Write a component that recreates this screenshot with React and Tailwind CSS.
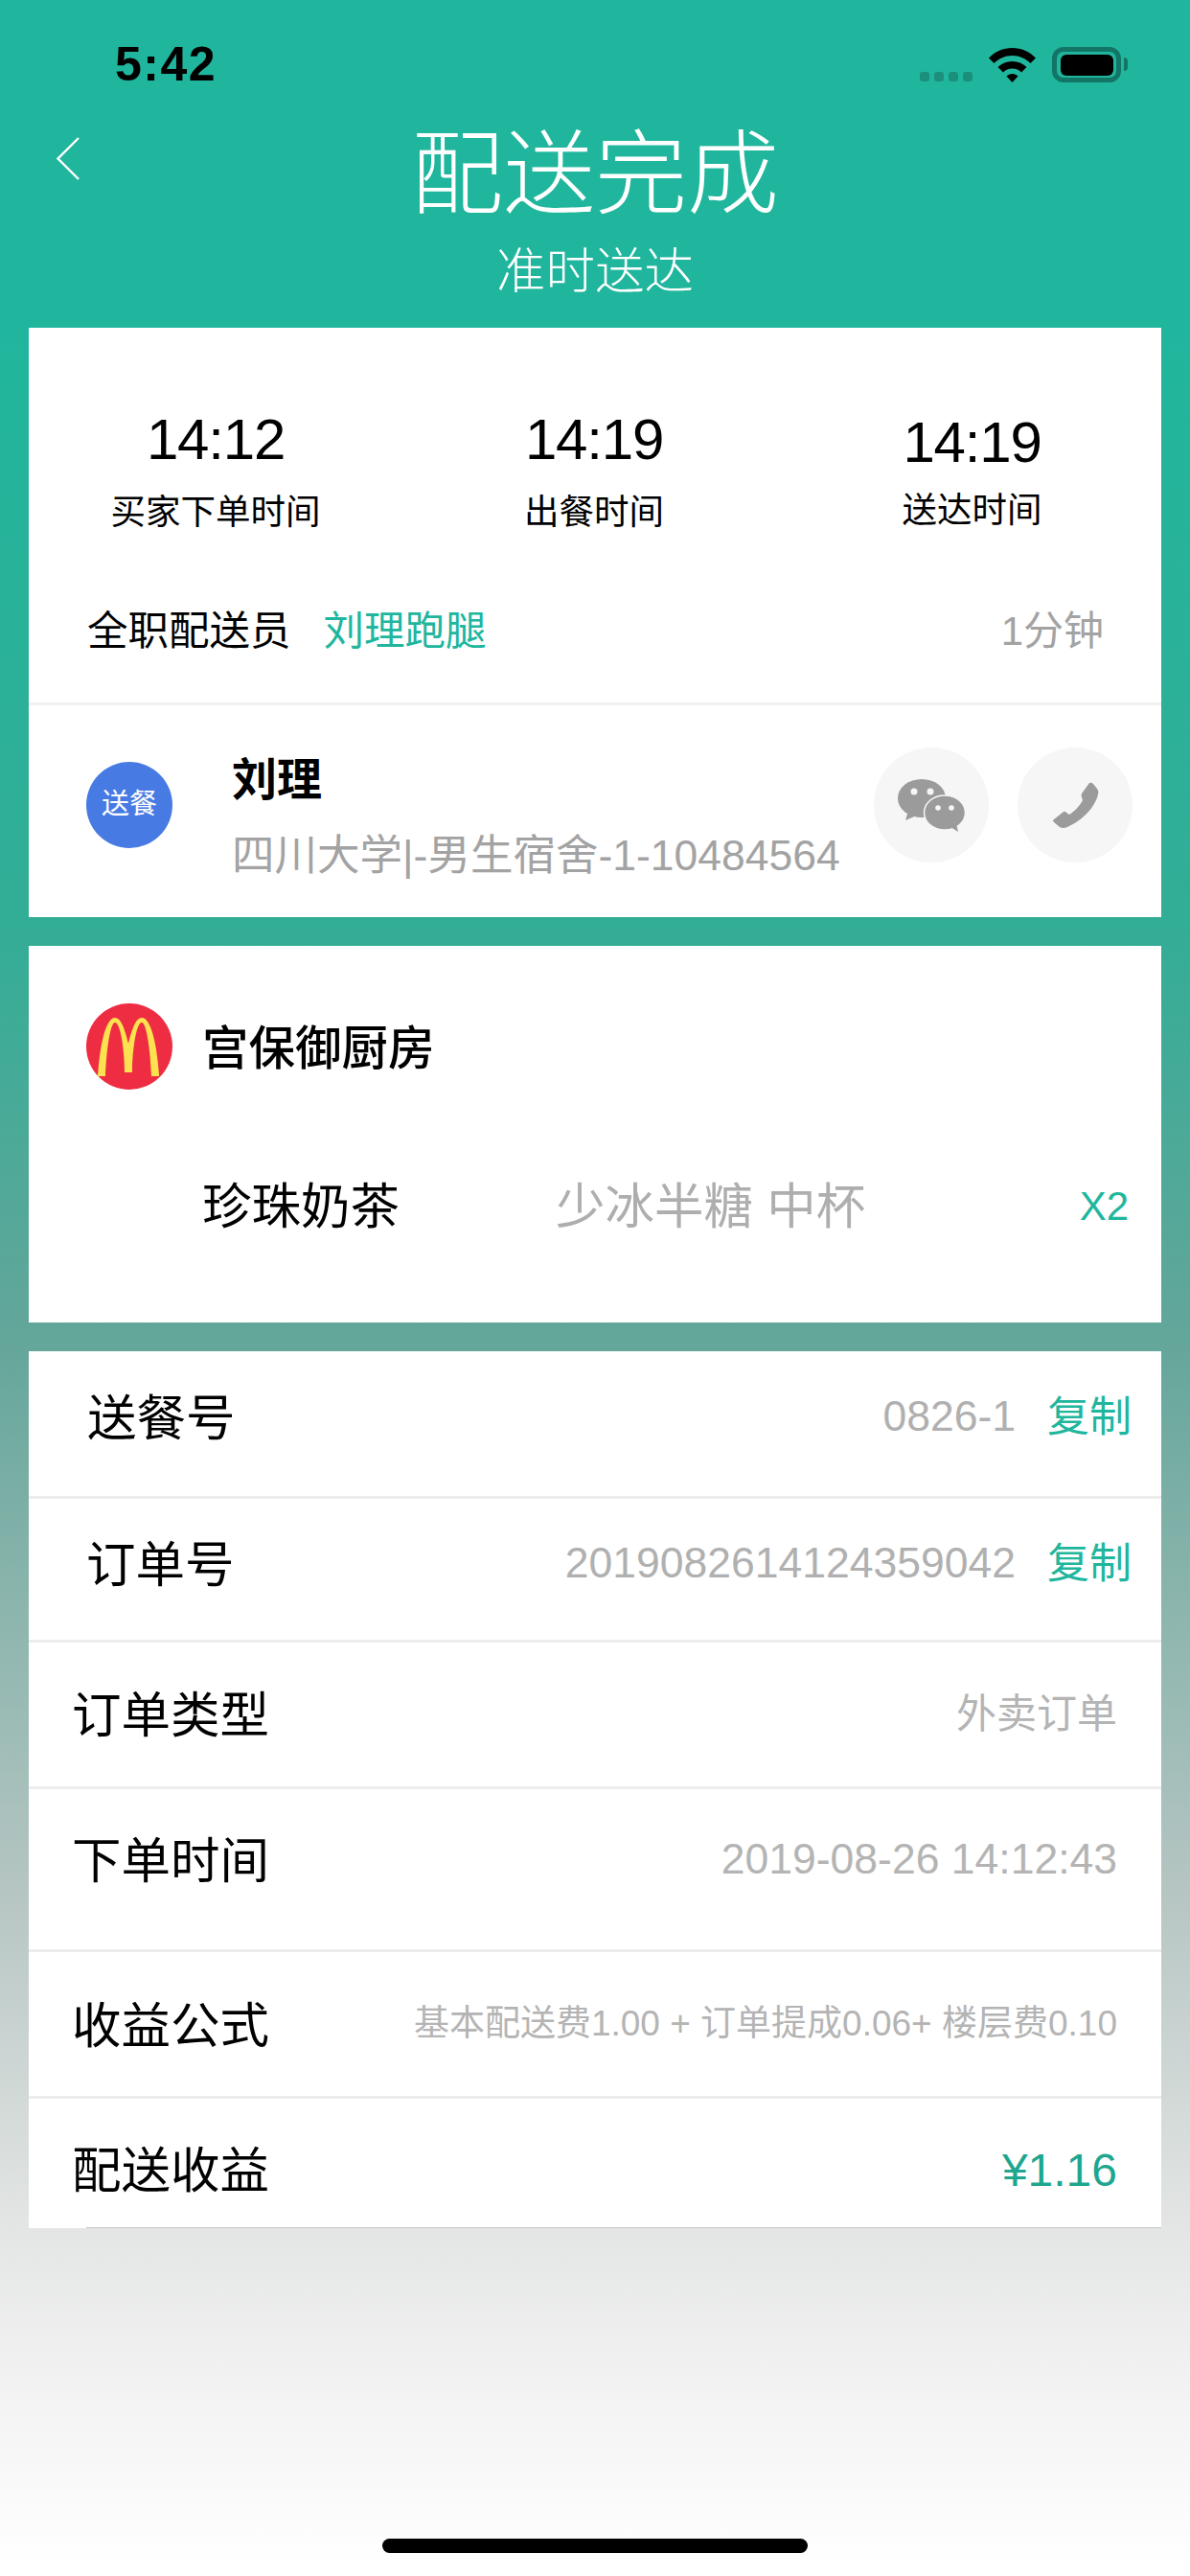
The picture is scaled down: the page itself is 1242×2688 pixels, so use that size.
const Row = ({ label, h, last, lp = "pl-[45px]", nudge = "", children }) => (
  <div className={`${h} ${lp} ${last ? "" : "border-b-[3px] border-[#ededed]"} flex items-center justify-between pr-[46px] ${nudge}`}>
    <span className="pt-[3px] text-[51.500px] leading-[60px] text-black">{label}</span>
    {children}
  </div>
);

const Copy = ({ value }) => (
  <div className="-mr-[15px] flex items-center gap-[33px]">
    <span className="text-[44.500px] leading-[50px] text-[#b0b0b0]">{value}</span>
    <span className="pt-[2px] text-[44px] leading-[50px] text-[#20b69d]">复制</span>
  </div>
);

const TimeCol = ({ time, label, extra = "mt-[26px]", top = "mt-[87px]" }) => (
  <div className="flex flex-col items-center">
    <div className={`${top} text-[60px] leading-[60px] tracking-[-1.2px] text-black`}>{time}</div>
    <div className={`${extra} text-[36.500px] leading-[40px] text-black`}>{label}</div>
  </div>
);

export default function App() {
  return (
    <div className="flex h-[2688px] w-[1242px] flex-col overflow-hidden bg-[linear-gradient(180deg,#20b69d_0px,#20b69d_340px,#33ad96_970px,#64a69a_1400px,#b5c5c2_1970px,#e4e6e5_2330px,#f3f3f3_2500px,#ffffff_2680px)] [font-family:'Liberation_Sans','Noto_Sans_CJK_SC',sans-serif]">
      {/* header */}
      <div className="flex h-[342px] shrink-0 flex-col">
        <div className="mt-[49px] flex h-[37px] items-center justify-between pl-[120px] pr-[65px]">
          <span className="text-[50px] font-bold leading-[37px] tracking-[1.500px] text-black">5:42</span>
          <div className="flex items-end">
            <div className="mb-[1px] flex gap-[5px]">
              <i className="h-[10px] w-[10px] rounded-[3px] bg-[#1c8f7c]" />
              <i className="h-[10px] w-[10px] rounded-[3px] bg-[#1c8f7c]" />
              <i className="h-[10px] w-[10px] rounded-[3px] bg-[#1c8f7c]" />
              <i className="h-[10px] w-[10px] rounded-[3px] bg-[#1c8f7c]" />
            </div>
            <svg className="ml-[17px]" width="49" height="36" viewBox="0 0 49 36">
              <path d="M0 10.5C6.5 4 15 0 24.5 0S42.5 4 49 10.5L43.5 16C38.5 11 32 8 24.5 8S10.500 11 5.500 16Z" />
              <path d="M9.500 20C13.500 16 18.700 14 24.500 14S35.500 16 39.500 20L34 25.500C31.500 23 28.200 21.500 24.500 21.500S17.500 23 15 25.500Z" />
              <path d="M18.500 29.500C20 28 22.200 27 24.500 27S29 28 30.500 29.500L24.500 36Z" />
            </svg>
            <div className="ml-[17px] flex h-[37px] w-[72px] items-center justify-center rounded-[12px] border-[5px] border-[#127565]">
              <div className="h-[22px] w-[55px] rounded-[6px] bg-black" />
            </div>
            <div className="mb-[12px] ml-[3px] h-[14px] w-[4px] rounded-r-[4px] bg-[#127565]" />
          </div>
        </div>
        <div className="mt-[48px] grid h-[96px] grid-cols-[1fr_auto_1fr]">
          <div className="pl-[59px] pt-[9px]">
            <svg width="24" height="45" viewBox="0 0 24 45" fill="none" stroke="white" strokeWidth="2.400">
              <path d="M23 1L1.500 22.500L23 44" />
            </svg>
          </div>
          <div className="text-[96px] font-light leading-[96px] text-white">配送完成</div>
          <div />
        </div>
        <div className="mt-[28px] text-center text-[51.500px] font-light leading-[50px] text-white">准时送达</div>
      </div>

      {/* delivery card */}
      <div className="mx-[30px] flex h-[615px] shrink-0 flex-col bg-white">
        <div className="flex h-[391px] shrink-0 flex-col">
          <div className="grid grid-cols-[390px_400px_389px]">
            <TimeCol time="14:12" label="买家下单时间" />
            <TimeCol time="14:19" label="出餐时间" />
            <TimeCol time="14:19" label="送达时间" top="mt-[90px]" extra="mt-[21px]" />
          </div>
          <div className="mt-[79px] flex items-center pl-[61px] pr-[60px] text-[42.500px] leading-[50px]">
            <span className="text-black">全职配送员</span>
            <span className="ml-[34px] text-[#20b69d]">刘理跑腿</span>
            <span className="ml-auto text-[42px] text-[#a3a3a3]">1分钟</span>
          </div>
        </div>
        <div className="flex flex-1 items-start border-t-[3px] border-[#f0f0f3] pl-[60px] pr-[30px]">
          <div className="mt-[59px] flex h-[90px] w-[90px] shrink-0 items-center justify-center rounded-full bg-[#477be3] text-[29px] text-white">送餐</div>
          <div className="ml-[62px] mt-[50px] flex flex-col">
            <span className="text-[47px] font-bold leading-[56px] text-black">刘理</span>
            <span className="mt-[26px] text-[44.500px] leading-[50px] text-[#a3a3a3]">四川大学|-男生宿舍-1-10484564</span>
          </div>
          <div className="ml-auto mt-[44px] flex gap-[30px]">
            <div className="h-[120px] w-[120px] rounded-full bg-[#f6f6f6]">
              <svg width="120" height="120" viewBox="0 0 120 120">
                <ellipse cx="50" cy="53" rx="25" ry="20" fill="#9b9b9b" />
                <path d="M36 66L33 76L47 70Z" fill="#9b9b9b" />
                <circle cx="42" cy="46" r="3.500" fill="#f6f6f6" />
                <circle cx="59" cy="46" r="3.500" fill="#f6f6f6" />
                <ellipse cx="74" cy="68" rx="21.500" ry="18" fill="#9b9b9b" stroke="#f6f6f6" strokeWidth="1.500" />
                <path d="M80 83L88 88L86 79Z" fill="#9b9b9b" />
                <circle cx="67" cy="63" r="2.800" fill="#f6f6f6" />
                <circle cx="81" cy="63" r="2.800" fill="#f6f6f6" />
              </svg>
            </div>
            <div className="h-[120px] w-[120px] rounded-full bg-[#f6f6f6]">
              <svg width="120" height="120" viewBox="0 0 120 120">
                <path fill="#9b9b9b" d="M75 37Q77 36 79 38L83 43Q85 45 84 49C81 62 68 76 52 83Q47 85 44 83L38 78Q36 76 38 75L48 67Q50 66 51 68L54 70C59 67 65 61 68 55L67 52Q66 50 67 48Z" />
              </svg>
            </div>
          </div>
        </div>
      </div>

      {/* goods card */}
      <div className="mx-[30px] mt-[30px] flex h-[393px] shrink-0 flex-col bg-white pl-[60px] pr-[34px]">
        <div className="mt-[60px] flex items-center">
          <div className="h-[90px] w-[90px] rounded-full bg-[#ee2d43]">
            <svg width="90" height="90" viewBox="0 0 90 90">
              <path fill="#fde24f" d="M12 76C14 45 20 15 30 15C37 15 41 30 44 42C47 30 51 15 58 15C68 15 74 45 76 76L68 76C67 50 63 20 58 20C52 20 48 50 48 72L40 72C40 50 36 20 30 20C25 20 21 50 20 76Z" />
            </svg>
          </div>
          <span className="ml-[31px] pt-[3px] text-[48.500px] font-medium leading-[60px] text-black">宫保御厨房</span>
        </div>
        <div className="mt-[92px] flex items-center pl-[121px]">
          <span className="text-[51.500px] leading-[60px] text-black">珍珠奶茶</span>
          <span className="ml-[163px] text-[51.500px] leading-[60px] text-[#aeaeae]">少冰半糖 中杯</span>
          <span className="ml-auto text-[42px] leading-[60px] text-[#20b69d]">X2</span>
        </div>
      </div>

      {/* info card */}
      <div className="mx-[30px] mt-[30px] flex h-[915px] shrink-0 flex-col bg-white">
        <Row label="送餐号" h="h-[154px]" lp="pl-[61px]" nudge="pb-[14px]"><Copy value="0826-1" /></Row>
        <Row label="订单号" h="h-[150px]" lp="pl-[60px]" nudge="pb-[12px]"><Copy value="2019082614124359042" /></Row>
        <Row label="订单类型" h="h-[153px]"><span className="text-[42px] leading-[50px] text-[#b4b4b4]">外卖订单</span></Row>
        <Row label="下单时间" h="h-[171px]" nudge="pb-[20px]"><span className="text-[44.500px] leading-[50px] text-[#b4b4b4]">2019-08-26 14:12:43</span></Row>
        <Row label="收益公式" h="h-[153px]"><span className="text-[37px] leading-[50px] text-[#b4b4b4]">基本配送费1.00 + 订单提成0.06+ 楼层费0.10</span></Row>
        <Row label="配送收益" h="h-[134px]" last nudge="pt-[12px]"><span className="pt-[3px] text-[48px] leading-[50px] text-[#1fa68f]">¥1.16</span></Row>
        <div className="ml-[60px] h-[1px] shrink-0 bg-[#c8c8c8]" />
      </div>

      <div className="mx-auto mt-[324px] h-[15px] w-[444px] rounded-full bg-black" />
    </div>
  );
}
